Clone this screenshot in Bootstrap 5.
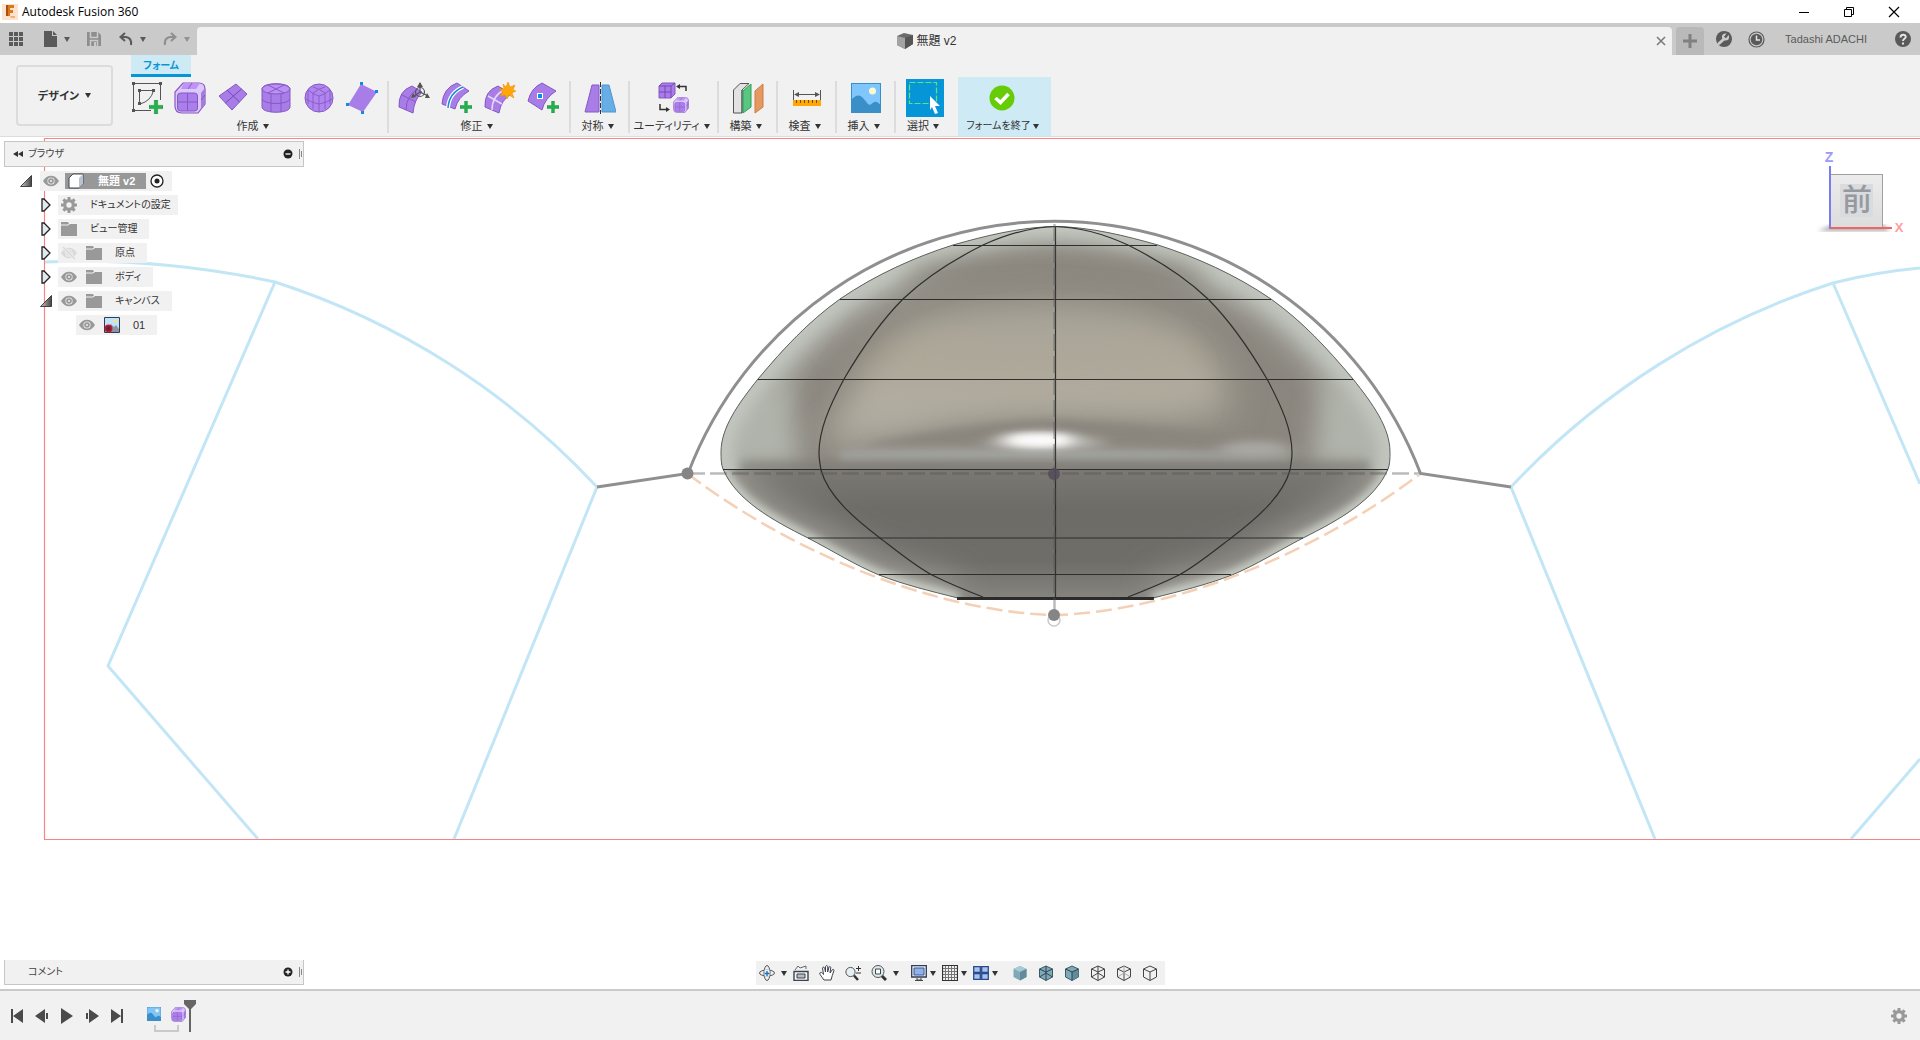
<!DOCTYPE html>
<html lang="ja">
<head>
<meta charset="utf-8">
<meta name="viewport" content="width=device-width, initial-scale=1">
<title>Autodesk Fusion 360</title>
<link href="https://cdn.jsdelivr.net/npm/bootstrap@5.3.0/dist/css/bootstrap.min.css" rel="stylesheet">
<style>
:root{--ui:#f1f1f1;--ink:#333;--jp:"Liberation Sans","Noto Sans CJK JP",sans-serif}
body{font-family:var(--jp);font-size:11px;line-height:16px;color:var(--ink);background:#fff;font-feature-settings:"palt"}
svg{display:block;flex:none}
.tb{border:0;background:none;padding:0;color:inherit;font:inherit;font-feature-settings:inherit;display:flex;align-items:center;justify-content:center;white-space:nowrap}
.tri{width:0;height:0;border:4px solid transparent;border-top:5px solid currentColor;border-bottom:0;border-left-width:3px;border-right-width:3px;flex:none}
.title-bar{height:23px;padding:0 20px 0 2px;font-family:"Open Sans","Noto Sans",sans-serif;font-size:12px;color:#000}
.title-bar .win{gap:33px}
.tab-strip{height:32px;background:#cacaca;color:#5a5a5a}
.quick{width:197px;padding-left:8px}
.doc-tab{background:var(--ui);border-radius:4px 4px 0 0;margin-top:4px;padding-right:6px;font-size:12px;color:#333}
.new-tab{width:28px;height:28px;background:#b9b9b9;border-radius:4px 4px 0 0;margin:4px 0 0 4px;color:#808080}
.account{padding:0 9px 0 12px}
.user{margin-left:20px}
.ribbon{background:var(--ui);border-bottom:1px solid #dcdcdc;height:82px}
.workspace{width:97px;height:61px;border:2px solid #dcdcdc;border-radius:4px;margin:10px 18px 0 16px;font-weight:700;gap:6px}
.ctx-tab{width:60px;height:22px;background:#cdeaf5;border-bottom:3px solid #0696d7;padding-top:2px;color:#0696d7;font-weight:700;font-size:10px}
.grp{height:59px;text-align:center}
.grp .icons{height:42px;gap:11px}
.grp .lbl{gap:4px;height:16px;margin-top:-1px;padding-right:4px}
.w-create{padding-right:9px}.w-modify{padding:0 10px 0 9px}.w-sym{width:57px}.w-util{width:87px}.w-std{width:57px}
.w-sel{width:58px}.w-fin{width:93px;background:#cdeaf5;margin-left:4px}
.w-fin .icons{padding-right:6px}
.w-fin .lbl{font-size:10px;gap:2px}
.rule{width:2px;height:52px;background:#dcdcdc;margin-top:4px}
.sel{background:#0696d7;width:38px;height:38px}
.stage{min-height:0;overflow:hidden}
.scene{position:absolute;inset:0;width:100%;height:100%}
.cube-view{position:absolute;right:12px;top:12px}
.dock{width:300px;background:var(--ui);border:1px solid #c6c6c6;height:26px;padding:0 0 0 8px;margin-left:4px;font-size:10px;color:#444}
.dock-top{margin-top:4px}
.dock-bottom{border-top:0;height:25px;margin-bottom:4px;padding-left:23px}
.tree{gap:4px;margin-top:4px}
.node{height:20px}
.lvl0{padding-left:20px}
.lvl1{padding-left:38px;font-size:10px}
.lvl2{padding-left:76px}
.chip{background:var(--ui);height:20px;padding:0 7px 0 3px}
.arrow{width:20px}
.chip .pic{margin-right:9px}
.chip .txt{margin-left:4px;padding-right:5px}
.root{background:#989898;color:#fff;font-weight:700;height:16px;padding:0 11px 0 3px;margin:0 4px 0 6px;gap:14px}
.bottom-row{display:grid;grid-template-columns:1fr auto 1fr;align-items:end}
.nav-tools{background:var(--ui);height:24px;padding:0 7px 0 3px;margin-bottom:4px;gap:10px;color:#333}
.nav-tools .drop{gap:3px;margin-right:-4px}
.nav-tools .wide{gap:6px}
.nav-tools .split{margin-left:6px}
.timeline{height:51px;background:var(--ui);border-top:2px solid #cacaca;padding:0 13px 0 10px;color:#4a4a4a}
.play{gap:11px;margin-right:22px}
</style>
</head>
<body class="vh-100 d-flex flex-column overflow-hidden">
<svg width="0" height="0" class="position-absolute" aria-hidden="true">
<defs>
<symbol id="eye" viewBox="0 0 16 12"><path d="M0 6C4-1 12-1 16 6C12 13 4 13 0 6Z" fill="#999"/><circle cx="8" cy="6" r="3.6" fill="#f1f1f1"/><circle cx="8" cy="6" r="2.800" fill="#999"/><circle cx="8" cy="6" r="1" fill="#f1f1f1"/></symbol>
<symbol id="folder" viewBox="0 0 16 14"><path d="M0 0H7L8 2H16V14H0Z" fill="#999"/><path d="M0 3H7L9 1.500H16" fill="none" stroke="#f1f1f1"/></symbol>
<symbol id="gear" viewBox="0 0 16 16"><g fill="currentColor"><path d="M6.500 0H9.500V16H6.500Z"/><path d="M6.500 0H9.500V16H6.500Z" transform="rotate(45 8 8)"/><path d="M6.500 0H9.500V16H6.500Z" transform="rotate(90 8 8)"/><path d="M6.500 0H9.500V16H6.500Z" transform="rotate(135 8 8)"/><circle cx="8" cy="8" r="6"/></g><circle cx="8" cy="8" r="2.700" fill="#f1f1f1"/></symbol>
<symbol id="closed" viewBox="0 0 10 14"><path d="M1 1H3L9 7L3 13H1Z" fill="#e4e9ee" stroke="#222" stroke-width="1.300"/></symbol>
<symbol id="open" viewBox="0 0 12 12"><path d="M11.500 .5V11.500H.5Z" fill="url(#og)" stroke="#222" stroke-width=".8"/></symbol>
<linearGradient id="og" x1="0" x2="1"><stop stop-color="#ccc"/><stop offset="1" stop-color="#444"/></linearGradient>
<symbol id="picture" viewBox="0 0 30 30"><rect x=".5" y=".5" width="29" height="29" fill="#7ec6fc" stroke="#3790cb"/><path d="M0 17C4 13 8 10 12 15L17 21C20 24 22 17 26 19L30 22V30H0Z" fill="#3b8fc9"/><circle cx="21.500" cy="8" r="3.500" fill="#fdf8cf"/></symbol>
<symbol id="tsbox" viewBox="0 0 32 32"><path d="M9 1H25Q31 1 31 7V22L24 31H8Q1 31 1 24V10Z" fill="#dcc8fb" stroke="#8659c2" stroke-width="1.200"/><path d="M10 1H26L22 7H7Z" fill="#bd93f5"/><path d="M31 6V22L27 27V11Z" fill="#a57be0"/><rect x="3.500" y="11" width="20" height="18" rx="3" fill="#ab7feb" stroke="#8659c2"/><path d="M13.500 11V29M3.500 20H23.500M27 18L31 13M14 7L18 1" fill="none" stroke="#8659c2"/></symbol>
<symbol id="plus" viewBox="0 0 13 13"><path d="M5 0H8V5H13V8H8V13H5V8H0V5H5Z" fill="#23b24b" stroke="#15893a" stroke-width=".5"/></symbol>
</defs>
</svg>

<header class="title-bar d-flex align-items-center justify-content-between">
 <div class="d-flex align-items-center">
  <svg width="16" height="16" viewBox="0 0 16 16"><rect width="16" height="16" fill="#fbe3cd"/><path d="M4 1H12V4H8V6H11V9H8V12H4Z" fill="#e0761c"/><path d="M4 1H6V12H4Z" fill="#a9500f"/><path d="M8 12H13V14H9Z" fill="#f0b27a"/></svg>
  <span class="ms-1">Autodesk Fusion 360</span>
 </div>
 <div class="d-flex win">
  <button class="tb" aria-label="最小化"><svg width="12" height="12"><path d="M1 6.500H11" stroke="#000"/></svg></button>
  <button class="tb" aria-label="元に戻す"><svg width="12" height="12" fill="none" stroke="#000"><path d="M1.500 3.500H8.500V10.500H1.500ZM3.500 3V1.500H10.500V8.500H9"/></svg></button>
  <button class="tb" aria-label="閉じる"><svg width="12" height="12"><path d="M1 1L11 11M11 1L1 11" stroke="#000" stroke-width="1.200"/></svg></button>
 </div>
</header>

<div class="tab-strip d-flex">
 <div class="quick d-flex align-items-center">
  <button class="tb me-3" aria-label="データパネル"><svg width="16" height="16" fill="#5a5a5a"><path d="M1 1H5V5H1ZM6 1H10V5H6ZM11 1H15V5H11ZM1 6H5V10H1ZM6 6H10V10H6ZM11 6H15V10H11ZM1 11H5V15H1ZM6 11H10V15H6ZM11 11H15V15H11Z"/></svg></button>
  <button class="tb gap-1 me-3" aria-label="ファイル"><svg width="16" height="16" class="ms-1"><path d="M0 0H8V5H13V16H0ZM9 0L13 4H9Z" fill="#5a5a5a"/></svg><i class="tri"></i></button>
  <button class="tb me-3" aria-label="保存"><svg width="16" height="16"><path d="M1 1H12L15 4V15H1Z" fill="#8e8e8e"/><path d="M4.500 1V6.500H11.500V1M4.500 15V9.500H11.500V15" fill="none" stroke="#cacaca" stroke-width="1.500"/><path d="M8 11H10V15H8Z" fill="#cacaca"/></svg></button>
  <button class="tb gap-1 me-3" aria-label="操作を元に戻す"><svg width="18" height="14" fill="none" stroke="#5a5a5a" stroke-width="2"><path d="M3 5H8Q14 6 13 13M7 1L2.500 5L7 9"/></svg><i class="tri"></i></button>
  <button class="tb gap-1" aria-label="やり直し"><svg width="18" height="14" fill="none" stroke="#8e8e8e" stroke-width="2"><path d="M13 5H8Q2 6 3 13M9 1L13.500 5L9 9"/></svg><i class="tri opacity-50"></i></button>
 </div>
 <div class="doc-tab d-flex align-items-center flex-grow-1">
  <div class="flex-grow-1 d-flex justify-content-center align-items-center gap-1">
   <svg width="16" height="16"><path d="M0 3L7 0L16 2V11L8 16L0 12Z" fill="#6b6b6b"/><path d="M0 3L8 5V16L0 12Z" fill="#a3a3a3"/><path d="M8 5L16 2V11L8 16Z" fill="#555"/></svg>
   <span>無題 v2</span>
  </div>
  <button class="tb" aria-label="タブを閉じる"><svg width="10" height="10"><path d="M1 1L9 9M9 1L1 9" stroke="#777" stroke-width="1.500"/></svg></button>
 </div>
 <button class="tb new-tab" aria-label="新しいタブ"><svg width="14" height="14"><path d="M7 0V14M0 7H14" stroke="currentColor" stroke-width="3"/></svg></button>
 <div class="account d-flex align-items-center">
  <button class="tb" aria-label="拡張機能"><svg width="16" height="16"><circle cx="8" cy="8" r="8" fill="#5a5a5a"/><path d="M3 12.500L8 8" stroke="#cacaca" stroke-width="3" stroke-linecap="round"/><circle cx="9.500" cy="6" r="3.600" fill="#cacaca"/><path d="M9 6.500L13 1.500" stroke="#5a5a5a" stroke-width="2.500"/></svg></button>
  <button class="tb ms-3" aria-label="ジョブ状況"><svg width="17" height="17"><circle cx="8.500" cy="8.500" r="7.500" fill="none" stroke="#5a5a5a" stroke-width="1.200"/><circle cx="8.500" cy="8.500" r="5.800" fill="#5a5a5a"/><path d="M8.500 4.500V9H12" fill="none" stroke="#e5e5e5" stroke-width="1.500"/></svg></button>
  <button class="tb user">Tadashi ADACHI</button>
  <button class="tb ms-4" aria-label="ヘルプ"><svg width="16" height="16" class="ms-1"><circle cx="8" cy="8" r="8" fill="#5a5a5a"/><path d="M5.500 6.500C5.500 2.500 11 3 10.700 6C10.500 8 8 7.500 8 10M8 11.500V13.500" fill="none" stroke="#e5e5e5" stroke-width="2"/></svg></button>
 </div>
</div>

<nav class="ribbon d-flex">
 <button class="tb workspace">デザイン<i class="tri"></i></button>
 <div class="flex-grow-1">
  <button class="tb ctx-tab">フォーム</button>
  <div class="d-flex">
   <div class="grp w-create">
    <div class="icons d-flex align-items-center">
     <button class="tb" aria-label="スケッチを作成"><svg width="32" height="32"><path d="M2.500 1.500V28.500H20M2.500 1.500H29.500V18M8.500 8.500H22.500M8.500 8.500V22.500M22.500 8.500Q20 19 9 22" fill="none" stroke="#555"/><path d="M1 0h3v3H1zM28 0h3v3h-3zM1 27h3v3H1zM7 7h3v3H7zM21 7h3v3h-3zM7 20h3v3H7z" fill="#555"/><use href="#plus" x="18" y="18" width="14" height="14"/></svg></button>
     <button class="tb" aria-label="直方体"><svg width="32" height="32"><use href="#tsbox"/></svg></button>
     <button class="tb" aria-label="平面"><svg width="32" height="32"><path d="M19 2L30 12L15 28L2 14Z" fill="#a97de8" stroke="#8659c2"/><path d="M10 8L22.500 20M24.500 7L8.500 21" stroke="#7549b5" fill="none"/></svg></button>
     <button class="tb" aria-label="円柱"><svg width="32" height="32"><path d="M2 7V25C2 32 30 32 30 25V7C30 0 2 0 2 7Z" fill="#a97de8" stroke="#8659c2"/><ellipse cx="16" cy="7" rx="14" ry="5" fill="#bb90f6" stroke="#8659c2"/><path d="M2 17C4 23 28 23 30 17M11 11.500V30M21 11.500V30M8 3L24 11M24 3L8 11" fill="none" stroke="#8659c2"/></svg></button>
     <button class="tb" aria-label="球"><svg width="32" height="32"><circle cx="16" cy="16" r="14" fill="#b185f0" stroke="#8659c2"/><path d="M16 14V30M5 8Q11 13 16 14Q21 13 27 8M10 5Q17 7 22 11M22 5Q15 7 10 11M10 11V27M22 11V27M3 17Q9 21 16 22Q23 21 29 17M5 8V22M27 8V22" fill="none" stroke="#8659c2" stroke-width=".9"/></svg></button>
     <button class="tb" aria-label="面"><svg width="32" height="32"><path d="M15 2L31 10L17 30L2 23Z" fill="#a97de8"/><path d="M14 0h3v3h-3zM29 8h3v3h-3zM0 21h3v3H0zM15 29h3v3h-3z" fill="#0d8bea"/></svg></button>
    </div>
    <button class="tb lbl w-100">作成<i class="tri"></i></button>
   </div>
   <div class="rule"></div>
   <div class="grp w-modify">
    <div class="icons d-flex align-items-center">
     <button class="tb" aria-label="フォームを編集"><svg width="32" height="32"><path d="M1 25Q0 9 14 4L24 10Q16 18 15 31Z" fill="#a97de8" stroke="#8659c2"/><path d="M4 13L18 20M8 28Q8 14 20 7" stroke="#8659c2" fill="none"/><g fill="none" stroke="#555" stroke-width="1.200"><circle cx="22" cy="10" r="4.500"/><path d="M22 10V1M22 10L15 15M22 10L30 14"/></g><path d="M22 0L25 5H19ZM13 16L15 11L18 15ZM32 16L27 16L29 11Z" fill="#555"/></svg></button>
     <button class="tb" aria-label="エッジを挿入"><svg width="32" height="32"><path d="M1 22Q2 6 16 1L28 9Q17 15 14 27Z" fill="#a97de8" stroke="#8659c2"/><path d="M7 26Q8 11 22 5" stroke="#fff" stroke-width="4" fill="none"/><path d="M7 26Q8 11 22 5" stroke="#188bd8" stroke-width="1.500" fill="none"/><use href="#plus" x="19" y="19" width="12" height="12"/></svg></button>
     <button class="tb" aria-label="細分割"><svg width="32" height="32"><path d="M1 25Q0 9 14 4L27 12Q17 18 15 31Z" fill="#a97de8" stroke="#8659c2"/><path d="M4 14L18 22M8 28Q8 14 20 8" stroke="#e6d8fb" stroke-width="1.500" fill="none"/><path d="M24 0L26 5L31 3L29 8L32 9L28 11L30 16L25 13L23 17L21 13L16 14L19 10L15 7L20 7L19 2L22 5Z" fill="#ffa708" stroke="#e88b00" stroke-width=".5"/></svg></button>
     <button class="tb" aria-label="点を挿入"><svg width="32" height="32"><path d="M1 19Q4 6 15 1L29 9Q18 16 15 28Z" fill="#a97de8" stroke="#8659c2"/><rect x="10.500" y="11.500" width="5" height="5" fill="#0d8bea" stroke="#fff"/><use href="#plus" x="20" y="19" width="12" height="12"/></svg></button>
    </div>
    <button class="tb lbl w-100">修正<i class="tri"></i></button>
   </div>
   <div class="rule"></div>
   <div class="grp w-sym">
    <button class="tb icons w-100" aria-label="ミラー"><svg width="32" height="32"><path d="M8 3H15V30H1Z" fill="#a97de8" stroke="#8659c2"/><path d="M18 3H25L32 30H18Z" fill="#67aee6" stroke="#4b96d1"/><path d="M16.500 0V32" stroke="#333" stroke-dasharray="5 2"/></svg></button>
    <button class="tb lbl w-100">対称<i class="tri"></i></button>
   </div>
   <div class="rule"></div>
   <div class="grp w-util">
    <button class="tb icons w-100" aria-label="変換"><svg width="32" height="32"><path d="M1 4L4 1H17V12L13 16H1Z" fill="#a97de8" stroke="#8659c2"/><path d="M1 4H13V16M13 4L17 1M7 4V16M1 10H13" fill="none" stroke="#7549b5"/><use href="#tsbox" x="15" y="15" width="16" height="16"/><path d="M28 9V4.500H21M2 22V27.500H9" fill="none" stroke="#333" stroke-width="1.500"/><path d="M18 4.500L22 2V7ZM12 27.500L8 25V30Z" fill="#333"/></svg></button>
    <button class="tb lbl w-100">ユーティリティ<i class="tri"></i></button>
   </div>
   <div class="rule"></div>
   <div class="grp w-std">
    <button class="tb icons w-100" aria-label="構築平面"><svg width="32" height="32"><path d="M1.500 8L8 1.500H17L10 8V31H1.500Z" fill="#e2e2e2" stroke="#555"/><path d="M10 8V31" stroke="#555"/><path d="M11 9L19 2V25L11 31Z" fill="#58c77f" stroke="#2f9f58"/><path d="M23 9L31 2V25L23 31Z" fill="#e59860" stroke="#cf7b40"/></svg></button>
    <button class="tb lbl w-100">構築<i class="tri"></i></button>
   </div>
   <div class="rule"></div>
   <div class="grp w-std">
    <button class="tb icons w-100" aria-label="計測"><svg width="30" height="32"><path d="M1.500 8V18M28.500 8V18M3 12.500H27" stroke="#555" fill="none"/><path d="M2 12.500L7 10V15ZM28 12.500L23 10V15Z" fill="#555"/><rect x="1" y="18" width="28" height="6" fill="#ffa708"/><path d="M4.500 18v3M8.500 18v3M12.500 18v3M16.500 18v3M20.500 18v3M24.500 18v3" stroke="#744b00"/></svg></button>
    <button class="tb lbl w-100">検査<i class="tri"></i></button>
   </div>
   <div class="rule"></div>
   <div class="grp w-std">
    <button class="tb icons w-100" aria-label="画像を挿入"><svg width="30" height="30"><use href="#picture"/></svg></button>
    <button class="tb lbl w-100">挿入<i class="tri"></i></button>
   </div>
   <div class="rule"></div>
   <div class="grp w-sel">
    <div class="icons d-flex align-items-center justify-content-center"><button class="tb sel" aria-label="選択ツール"><svg width="38" height="38"><path d="M3.500 3.500H30.500V24.500H3.500Z" fill="none" stroke="#5ee37c" stroke-width="1.200" stroke-dasharray="6 2"/><path d="M24 17L34 27H29L32 34L29 35L26 28L24 31Z" fill="#fff"/></svg></button></div>
    <button class="tb lbl w-100">選択<i class="tri"></i></button>
   </div>
   <div class="grp w-fin">
    <button class="tb icons w-100" aria-label="完了"><svg width="26" height="26"><circle cx="13" cy="13" r="12.500" fill="#66cc05"/><path d="M6.500 13L11.500 17.500L19.500 9" fill="none" stroke="#fff" stroke-width="3.500"/></svg></button>
    <button class="tb lbl w-100">フォームを終了<i class="tri"></i></button>
   </div>
  </div>
 </div>
</nav>

<main class="stage position-relative flex-grow-1 d-flex flex-column">
 <svg class="scene" viewBox="0 137 1920 852" preserveAspectRatio="xMidYMid slice" aria-label="前面ビュー">
  <defs>
   <path id="half" d="M1056 226.500C1020 227 985 236 953 245C915 257 875 275 840 299C808 322 784 348 758 379C738 404 721 428 721 452C721 458 721 464 723 469C736 500 772 520 808 538C833 551 855 565 879 575C905 585 930 591 958 598"/>
   <path id="inner" d="M1056 226.500C1030 227 1005 235 983 245C955 259 925 278 903 299C880 322 861 350 844 379C829 407 819 430 819 453C819 459 820 464 821 470C828 496 855 519 880 538C897 551 915 566 932 575C948 583 965 590 983 597"/>
   <clipPath id="body"><path d="M1056 226.500C1020 227 985 236 953 245C915 257 875 275 840 299C808 322 784 348 758 379C738 404 721 428 721 452C721 458 721 464 723 469C736 500 772 520 808 538C833 551 855 565 879 575C905 585 930 591 958 598H1153C1181 591 1206 585 1232 575C1256 565 1278 551 1303 538C1339 520 1375 500 1388 469C1390 464 1390 458 1390 452C1390 428 1373 404 1353 379C1327 348 1303 322 1271 299C1236 275 1196 257 1158 245C1126 236 1091 227 1055 226.500Z"/></clipPath>
   <clipPath id="upper"><path d="M700 200H1410V470H700Z"/></clipPath>
   <clipPath id="lower"><path d="M700 470H1410V600H700Z"/></clipPath>
   <linearGradient id="low" x1="0" x2="0" y1="0" y2="1"><stop stop-color="#7b7873"/><stop offset=".3" stop-color="#6d6c67"/><stop offset=".7" stop-color="#6e6d68"/><stop offset="1" stop-color="#87857f"/></linearGradient>
   <linearGradient id="mid" x1="0" x2="0" y1="0" y2="1"><stop stop-color="#a6a499"/><stop offset=".4" stop-color="#b0a899"/><stop offset=".65" stop-color="#aeaa9c"/><stop offset="1" stop-color="#b8b3aa"/></linearGradient>
   <linearGradient id="rim" x1="0" x2="0" y1="0" y2="1"><stop stop-color="#7f7e78" stop-opacity="0"/><stop offset="1" stop-color="#7a7873"/></linearGradient>
   <filter id="b3" x="-30%" y="-90%" width="160%" height="280%"><feGaussianBlur stdDeviation="4"/></filter>
   <filter id="b6" x="-30%" y="-90%" width="160%" height="280%"><feGaussianBlur stdDeviation="9 4"/></filter>
   <filter id="b8" x="-30%" y="-60%" width="160%" height="220%"><feGaussianBlur stdDeviation="8"/></filter>
   <filter id="b10" x="-30%" y="-60%" width="160%" height="220%"><feGaussianBlur stdDeviation="12"/></filter>
   <filter id="b20" x="-30%" y="-60%" width="160%" height="220%"><feGaussianBlur stdDeviation="17"/></filter>
  </defs>
  <g fill="none" stroke="#c2e6f6" stroke-width="3">
   <path d="M45 262Q160 257 275 282A756 756 0 0 1 597 487L454 839M275 282L108 666L258 839"/>
   <path d="M1920 268Q1876 272 1833 283A756 756 0 0 0 1511 487L1655 839M1833 283L1920 484M1920 759L1851 839"/>
  </g>
  <path d="M1920 138.500H44.500V839.500H1920" fill="none" stroke="#f98484" stroke-width="1.200"/>
  <g clip-path="url(#body)">
   <path d="M700 200H1410V480H700Z" fill="#8b877f"/>
   <g clip-path="url(#upper)">
    <g filter="url(#b10)" fill="none" stroke="#adafa8" stroke-width="50"><use href="#half"/><use href="#half" transform="translate(2111 0) scale(-1 1)"/></g>
    <path d="M725 400L790 375L800 470H715ZM1386 400L1322 375L1312 470H1396Z" fill="#b0b3ab" filter="url(#b10)"/>
    <g filter="url(#b8)" fill="none" stroke="#c3c8c0" stroke-width="22"><use href="#half"/><use href="#half" transform="translate(2111 0) scale(-1 1)"/></g>
    <path d="M920 268Q1056 238 1190 268L1210 288H900Z" fill="#8b877f" filter="url(#b10)"/>
    <path d="M825 445C845 390 880 330 930 315C1000 300 1120 300 1180 325C1215 350 1232 380 1228 412C1200 425 1120 405 1020 412C960 416 900 430 825 450Z" fill="url(#mid)" filter="url(#b20)"/>
    <path d="M870 410C905 350 960 330 1050 328C1110 328 1150 340 1180 365L1190 405C1100 415 1000 400 860 425Z" fill="url(#mid)" filter="url(#b20)"/>
    <path d="M865 445C950 428 1010 420 1060 420C1130 424 1200 430 1250 438L1220 446H870Z" fill="#8a867e" filter="url(#b3)"/>
    <ellipse cx="1255" cy="450" rx="36" ry="9" fill="#aaa8a3" filter="url(#b6)"/>
    <ellipse cx="1045" cy="443" rx="60" ry="8" fill="#b3b0ab" filter="url(#b6)"/>
    <path d="M840 452Q1050 444 1290 455V461H840Z" fill="#a6a7a3" filter="url(#b3)"/>
    <ellipse cx="1039" cy="440" rx="38" ry="7" fill="#fff" filter="url(#b6)"/>
    <ellipse cx="1039" cy="440" rx="28" ry="3" fill="#fff" filter="url(#b3)"/>
    <path d="M740 456H1370V472H740Z" fill="url(#rim)" filter="url(#b3)"/>
   </g>
   <g clip-path="url(#lower)">
    <path d="M700 470H1410V600H700Z" fill="url(#low)"/>
    <g filter="url(#b20)" fill="none" stroke="#9b9a93" stroke-width="36"><use href="#half"/><use href="#half" transform="translate(2111 0) scale(-1 1)"/></g>
    <g filter="url(#b3)" fill="none" stroke="#cdd3ca" stroke-width="10"><use href="#half"/><use href="#half" transform="translate(2111 0) scale(-1 1)"/></g>
   </g>
  </g>
  <g fill="none" stroke="#626460"><use href="#half"/><use href="#half" transform="translate(2111 0) scale(-1 1)"/></g>
  <g fill="none" stroke="#2e2e2c" stroke-width="1.200"><use href="#inner"/><use href="#inner" transform="translate(2111 0) scale(-1 1)"/>
   <path d="M953 245.500H1157M840 299.500H1271M758 379.500H1353M723 469.500H1388M808 538H1303M879 574.500H1231M1055.500 226V598"/></g>
  <path d="M957 598.500H1154" stroke="#2b2b2b" stroke-width="3"/>
  <path d="M688 473.500H1420M1054.500 224V612" stroke="#555" stroke-opacity=".4" stroke-width="2.500" stroke-dasharray="17 5" fill="none"/>
  <path d="M688 474C798 557 940 612 1054 615C1168 612 1310 557 1420 474" fill="none" stroke="#f3d0b6" stroke-width="2.500" stroke-dasharray="16 6"/>
  <path d="M597 487L688 473.500A392 392 0 0 1 1420.500 473.500L1511 487" fill="none" stroke="#8f8f8f" stroke-width="3"/>
  <circle cx="1054" cy="620" r="6" fill="#fff" stroke="#c9c9c9" stroke-width="1.500"/>
  <g fill="#858585"><circle cx="687.500" cy="473.500" r="6"/><circle cx="1054" cy="615" r="6"/></g>
  <circle cx="1054" cy="474" r="6" fill="#504a58" opacity=".8"/>
 </svg>

 <svg class="cube-view" width="94" height="90" viewBox="1814 149 94 90" aria-label="ビューキューブ">
  <defs><linearGradient id="face" x1="0" x2="0" y1="0" y2="1"><stop stop-color="#ececec"/><stop offset="1" stop-color="#dcdcdc"/></linearGradient><filter id="sh"><feGaussianBlur stdDeviation="2"/></filter></defs>
  <path d="M1818 231L1832 225H1884L1890 231Z" fill="#aaa" filter="url(#sh)"/>
  <rect x="1830.500" y="174.500" width="52" height="53" fill="url(#face)" stroke="#9fa1a1"/>
  <rect x="1840" y="184" width="33" height="33" fill="#d9dbdf"/>
  <text x="1857" y="210" text-anchor="middle" font-size="30" font-weight="500" font-family="Noto Sans CJK JP" fill="#96999e">前</text>
  <path d="M1830 166V229" stroke="#7b7bf0" stroke-width="2"/><path d="M1830 228H1892" stroke="#ee6565" stroke-width="2"/>
  <text x="1829" y="162" text-anchor="middle" font-size="14" font-family="Liberation Sans" font-weight="700" fill="#9a9afa">Z</text>
  <text x="1899" y="232" text-anchor="middle" font-size="13" font-family="Liberation Sans" font-weight="700" fill="#ff9c9c">X</text>
 </svg>

 <section class="position-relative">
  <div class="dock dock-top d-flex align-items-center gap-1">
   <button class="tb" aria-label="折りたたむ"><svg width="11" height="8"><path d="M5 1V7L0 4ZM10 1V7L5 4Z" fill="#333"/></svg></button>
   <span class="me-auto">ブラウザ</span>
   <button class="tb" aria-label="ブラウザを最小化"><svg width="10" height="10"><circle cx="5" cy="5" r="4.500" fill="#222"/><path d="M2.500 5H7.500" stroke="#fff" stroke-width="1.300"/></svg></button>
   <svg width="6" height="12"><path d="M2.500 1V11M4.500 3V9" stroke="#888"/></svg>
  </div>
  <div class="tree d-flex flex-column">
   <div class="node lvl0 d-flex align-items-center"><button class="tb arrow justify-content-start" aria-label="展開"><svg width="12" height="12"><use href="#open"/></svg></button>
    <div class="chip d-flex align-items-center pe-2"><svg width="16" height="12"><use href="#eye"/></svg>
     <button class="tb root"><svg width="16" height="16"><path d="M1 5L5 1H15V11L11 15H1Z" fill="#fff" stroke="#434a52"/><path d="M11 5L15 1V11L11 15Z" fill="#b9c4d0"/></svg>無題 v2</button>
     <svg width="14" height="14"><circle cx="7" cy="7" r="6" fill="#fff" stroke="#222" stroke-width="1.300"/><circle cx="7" cy="7" r="2.500" fill="#222"/></svg></div></div>
   <div class="node lvl1 d-flex align-items-center"><button class="tb arrow" aria-label="展開"><svg width="10" height="14" class="me-1"><use href="#closed"/></svg></button><div class="chip d-flex align-items-center"><svg width="16" height="16" class="pic" color="#999"><use href="#gear"/></svg><span class="txt pe-0">ドキュメントの設定</span></div></div>
   <div class="node lvl1 d-flex align-items-center"><button class="tb arrow" aria-label="展開"><svg width="10" height="14" class="me-1"><use href="#closed"/></svg></button><div class="chip d-flex align-items-center"><svg width="16" height="14" class="pic"><use href="#folder"/></svg><span class="txt">ビュー管理</span></div></div>
   <div class="node lvl1 d-flex align-items-center"><button class="tb arrow" aria-label="展開"><svg width="10" height="14" class="me-1"><use href="#closed"/></svg></button><div class="chip d-flex align-items-center"><svg width="16" height="14" class="pic"><g opacity=".25"><use href="#eye" y="1" width="16" height="12"/></g><path d="M2 1L14 13" stroke="#f1f1f1" stroke-width="3"/><path d="M2 1L14 13" stroke="#d8d8d8" stroke-width="1.500"/></svg><svg width="16" height="14" class="pic"><use href="#folder"/></svg><span class="txt">原点</span></div></div>
   <div class="node lvl1 d-flex align-items-center"><button class="tb arrow" aria-label="展開"><svg width="10" height="14" class="me-1"><use href="#closed"/></svg></button><div class="chip d-flex align-items-center"><svg width="16" height="12" class="pic"><use href="#eye"/></svg><svg width="16" height="14" class="pic"><use href="#folder"/></svg><span class="txt">ボディ</span></div></div>
   <div class="node lvl1 d-flex align-items-center"><button class="tb arrow" aria-label="折りたたむ"><svg width="12" height="12" class="me-1"><use href="#open"/></svg></button><div class="chip d-flex align-items-center"><svg width="16" height="12" class="pic"><use href="#eye"/></svg><svg width="16" height="14" class="pic"><use href="#folder"/></svg><span class="txt">キャンバス</span></div></div>
   <div class="node lvl2 d-flex align-items-center"><div class="chip d-flex align-items-center"><svg width="16" height="12" class="pic"><use href="#eye"/></svg><svg width="16" height="16" class="pic"><path d="M.5.5H15.500V15.500H.5Z" fill="#bfe4fa" stroke="#333c50"/><path d="M1 12L7 7L10 10L12 8L15 12V15H1Z" fill="#8b93a5"/><circle cx="11.500" cy="4" r="1.600" fill="#ffdf70"/><circle cx="4.500" cy="11.500" r="3.200" fill="#5a2a3c" stroke="#d3142c" stroke-width="1.400"/></svg><span class="txt">01</span></div></div>
  </div>
 </section>

 <div class="bottom-row position-relative mt-auto">
  <div class="dock dock-bottom d-flex align-items-center gap-1">
   <span class="me-auto">コメント</span>
   <button class="tb" aria-label="コメントを開く"><svg width="10" height="10"><circle cx="5" cy="5" r="4.500" fill="#222"/><path d="M2.500 5H7.500M5 2.500V7.500" stroke="#fff" stroke-width="1.300"/></svg></button>
   <svg width="6" height="12"><path d="M2.500 1V11M4.500 3V9" stroke="#888"/></svg>
  </div>
  <div class="nav-tools d-flex align-items-center">
   <button class="tb drop wide" aria-label="オービット"><svg width="16" height="16" fill="none" stroke="#555"><ellipse cx="8" cy="8" rx="3" ry="7.500"/><ellipse cx="8" cy="8" rx="7.500" ry="3"/><path d="M5.500 4.500H10.500V11.500H5.500Z" fill="#f1f1f1" stroke="none"/><path d="M8 6V11M5.500 8.500H10.500" stroke="#1b74c4" stroke-width="1.400"/></svg><i class="tri"></i></button>
   <button class="tb" aria-label="ビュー正面"><svg width="16" height="16"><path d="M1 6.500H15V15.500H1Z" fill="#f5f5f5" stroke="#3c434b" stroke-width="1.400"/><path d="M4 9H12V13H4Z" fill="#b9bec4" stroke="#3c434b"/><path d="M2 5L5 1L7 3L13 1V4" fill="none" stroke="#666"/></svg></button>
   <button class="tb" aria-label="画面移動"><svg width="16" height="16"><path d="M5 15C3 12 1 10 .7 8C2 6.500 3.500 8 4.500 9.500L3.500 3C4 1.500 5.500 2 5.700 3.500L6.500 7V1.500C7 .3 8.500.3 8.700 1.500V7L10 2C10.500 1 12 1.500 11.700 3L11 8L13.500 4.500C14.500 4 15.300 5 14.800 6C13.500 9 13 12 12 15Z" fill="#fff" stroke="#3c434b"/></svg></button>
   <button class="tb" aria-label="ズーム"><svg width="16" height="16"><circle cx="5.500" cy="7" r="4.600" fill="#e5f0f3" stroke="#555"/><path d="M9 10.500L13 15" stroke="#333" stroke-width="2.500"/><path d="M11 3.500H16M13.500 1V6M11 8H16" stroke="#333"/></svg></button>
   <button class="tb drop wide" aria-label="フィット"><svg width="16" height="16"><circle cx="7" cy="6.500" r="6" fill="#dcecee" stroke="#555"/><path d="M4.500 4H9.500V9H4.500Z" fill="#fff" stroke="#444"/><path d="M11 11L15 15" stroke="#333" stroke-width="3"/></svg><i class="tri"></i></button>
   <button class="tb drop split" aria-label="表示設定"><svg width="16" height="16"><path d="M.7.7H15.300V12H.7Z" fill="#e8eef8" stroke="#333c50" stroke-width="1.300"/><path d="M3 3H13V10H3Z" fill="#8fb3e8" stroke="#3b5a96"/><path d="M6 13V15H10V13M4 15.500H12" stroke="#444" fill="none"/></svg><i class="tri"></i></button>
   <button class="tb drop" aria-label="グリッドとスナップ"><svg width="16" height="16" fill="none"><path d="M3.500 1V15M6.500 1V15M9.500 1V15M12.500 1V15M1 3.500H15M1 6.500H15M1 9.500H15M1 12.500H15" stroke="#777"/><path d="M.5.5H15.500V15.500H.5Z" stroke="#333" stroke-width="1.200"/></svg><i class="tri"></i></button>
   <button class="tb drop" aria-label="ビューポート"><svg width="16" height="14"><path d="M.7.7H7.300V6.300H.7ZM8.700.7H15.300V6.300H8.700ZM.7 7.700H7.300V13.300H.7ZM8.700 7.700H15.300V13.300H8.700Z" fill="#a9c1ee" stroke="#294a8a" stroke-width="1.300"/></svg><i class="tri"></i></button>
   <button class="tb ms-2" aria-label="シェーディング"><svg width="16" height="16"><path d="M8 1L14.500 4V12L8 15.500L1.500 12V4Z" fill="#7fa9b7"/><path d="M8 1L14.500 4L8 7L1.500 4Z" fill="#a5cbd6"/><path d="M8 7L14.500 4V12L8 15.500Z" fill="#648b98"/></svg></button>
   <button class="tb" aria-label="シェーディング（隠線）"><svg width="16" height="16"><path d="M8 1L14.500 4V12L8 15.500L1.500 12V4Z" fill="#7fa9b7" stroke="#3b5a66"/><path d="M1.500 4L8 7L14.500 4M8 1V15.500M1.500 12L8 8L14.500 12" fill="none" stroke="#2c454e"/></svg></button>
   <button class="tb" aria-label="シェーディング（エッジ）"><svg width="16" height="16"><path d="M8 1L14.500 4V12L8 15.500L1.500 12V4Z" fill="#7fa9b7" stroke="#3b5a66"/><path d="M8 7L14.500 4V12L8 15.500Z" fill="#648b98"/><path d="M1.500 4L8 7L14.500 4M8 7V15.500" fill="none" stroke="#2c454e"/></svg></button>
   <button class="tb" aria-label="ワイヤフレーム"><svg width="16" height="16" fill="none" stroke="#444"><path d="M8 1L14.500 4V12L8 15.500L1.500 12V4ZM1.500 4L8 7L14.500 4M8 1V15.500M1.500 12L8 8L14.500 12"/></svg></button>
   <button class="tb" aria-label="ワイヤフレーム（隠線）"><svg width="16" height="16" fill="none" stroke="#444"><path d="M8 1L14.500 4V12L8 15.500L1.500 12V4ZM1.500 4L8 7L14.500 4M8 7V15.500"/><path d="M8 1V8M1.500 12L8 8L14.500 12" stroke="#aaa"/></svg></button>
   <button class="tb" aria-label="ワイヤフレーム（エッジ）"><svg width="16" height="16" fill="none" stroke="#444"><path d="M8 1L14.500 4V12L8 15.500L1.500 12V4ZM1.500 4L8 7L14.500 4M8 7V15.500"/></svg></button>
  </div>
 </div>
</main>

<footer class="timeline d-flex align-items-center">
 <div class="play d-flex">
  <button class="tb" aria-label="先頭へ"><svg width="14" height="16" fill="currentColor"><path d="M1 1H3V15H1ZM13 1V15L3 8Z"/></svg></button>
  <button class="tb" aria-label="前へ"><svg width="14" height="16" fill="currentColor"><path d="M10 1V15L0 8ZM11 5H13V11H11Z"/></svg></button>
  <button class="tb" aria-label="再生"><svg width="14" height="16" fill="currentColor"><path d="M1 0L13 8L1 16Z"/></svg></button>
  <button class="tb" aria-label="次へ"><svg width="14" height="16" fill="currentColor"><path d="M4 1V15L14 8ZM1 5H3V11H1Z"/></svg></button>
  <button class="tb" aria-label="最後へ"><svg width="14" height="16" fill="currentColor"><path d="M1 1V15L11 8ZM11 1H13V15H11Z"/></svg></button>
 </div>
 <svg width="52" height="36" viewBox="146 999 52 36" aria-label="タイムライン"><use href="#picture" x="147" y="1008" width="14" height="14"/><use href="#tsbox" x="171" y="1008" width="15" height="15"/><path d="M155 1026V1032H178V1026" fill="none" stroke="#cacaca" stroke-width="2"/><path d="M184 1001H196V1005L191 1010V1033H189V1010L184 1005Z" fill="#666"/></svg>
 <button class="tb ms-auto" aria-label="設定"><svg width="16" height="16" color="#999"><use href="#gear"/></svg></button>
</footer>
<script src="https://cdn.jsdelivr.net/npm/bootstrap@5.3.0/dist/js/bootstrap.bundle.min.js"></script>
</body>
</html>
